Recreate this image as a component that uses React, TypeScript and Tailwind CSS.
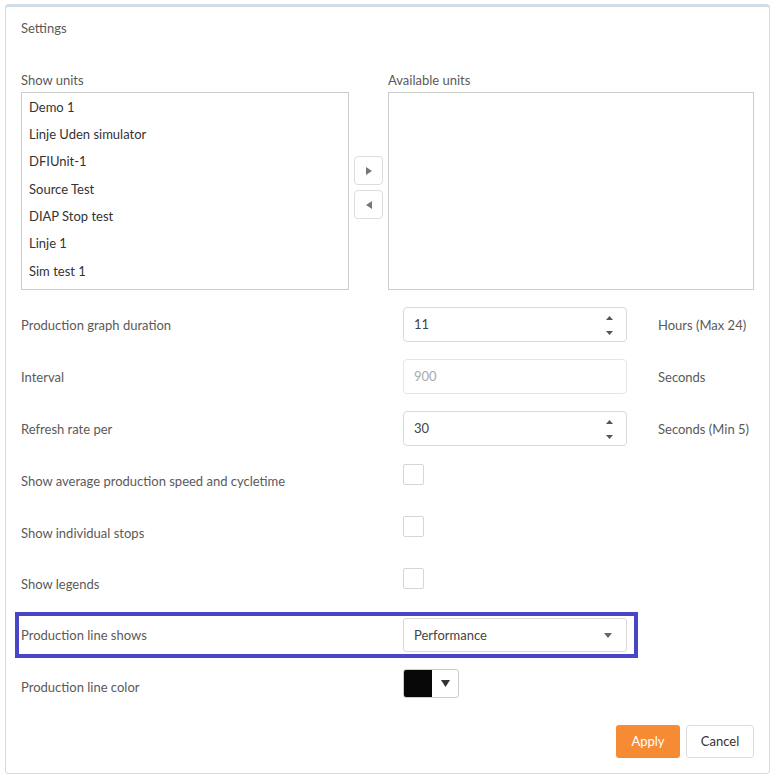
import React from "react"

const units = [
  "Demo 1",
  "Linje Uden simulator",
  "DFIUnit-1",
  "Source Test",
  "DIAP Stop test",
  "Linje 1",
  "Sim test 1",
]

function Spinner() {
  return (
    <div className="flex flex-col items-center gap-[11px] pr-[13px]">
      <svg width="7" height="4" viewBox="0 0 7 4">
        <path d="M0 4 L3.5 0 L7 4 Z" fill="#555" />
      </svg>
      <svg width="7" height="4" viewBox="0 0 7 4">
        <path d="M0 0 L7 0 L3.5 4 Z" fill="#555" />
      </svg>
    </div>
  )
}

function NumberField({ value, disabled }: { value: string; disabled?: boolean }) {
  return (
    <div
      className={
        disabled
          ? "w-[224px] h-[35px] rounded-[4px] border border-[#e6e6e6] flex items-center pl-[10px] pt-[1px] text-[#aaaaaa]"
          : "w-[224px] h-[35px] rounded-[4px] border border-[#d9d9d9] flex items-center justify-between pl-[10px] pt-[1px] text-[#444]"
      }
    >
      <span>{value}</span>
      {!disabled && <Spinner />}
    </div>
  )
}

function Checkbox() {
  return <div className="w-[21px] h-[21px] mt-[1px] rounded-[2px] border border-[#d6d6d6] bg-white" />
}

function Row({
  label,
  children,
  unit,
}: {
  label: string
  children: React.ReactNode
  unit?: string
}) {
  return (
    <div className="flex h-[35px] mb-[17px]">
      <div className="w-[382px] flex items-center pt-[2px] text-[#5a5a5a]">{label}</div>
      <div className="w-[224px]">{children}</div>
      {unit && <div className="ml-[31px] flex items-center pt-[2px] text-[#5a5a5a]">{unit}</div>}
    </div>
  )
}

export default function App() {
  return (
    <div className="bg-white min-h-[781px] pt-[4px] pl-[5px] text-[13px]" style={{ fontFamily: "Lato, 'Noto Sans', sans-serif" }}>
      <div className="w-[765px] border border-t-[3px] border-[#d2dce5] rounded-[4px] px-[15px] pt-[12px] pb-[15px]">
        <div className="h-[18px] leading-[18px] text-[#5a5a5a]">Settings</div>

        {/* unit pickers */}
        <div className="flex mt-[34px] mb-[17px]">
          <div className="w-[328px]">
            <div className="h-[18px] leading-[18px] text-[#5a5a5a] mb-[3px]">Show units</div>
            <div className="h-[198px] border border-[#cccccc] pl-[7px] pt-[1px]">
              {units.map((u) => (
                <div key={u} className="h-[27.3px] flex items-center text-[#333]">
                  {u}
                </div>
              ))}
            </div>
          </div>

          <div className="w-[39px] flex flex-col items-center pt-[85px] gap-[5px]">
            <button className="w-[29px] h-[29px] rounded-[4px] border border-[#dddddd] flex items-center justify-center">
              <svg width="6" height="8" viewBox="0 0 6 8">
                <path d="M0 0 L6 4 L0 8 Z" fill="#777" />
              </svg>
            </button>
            <button className="w-[29px] h-[29px] rounded-[4px] border border-[#dddddd] flex items-center justify-center">
              <svg width="6" height="8" viewBox="0 0 6 8">
                <path d="M6 0 L0 4 L6 8 Z" fill="#777" />
              </svg>
            </button>
          </div>

          <div className="w-[366px]">
            <div className="h-[18px] leading-[18px] text-[#5a5a5a] mb-[3px]">Available units</div>
            <div className="h-[198px] border border-[#cccccc]" />
          </div>
        </div>

        <Row label="Production graph duration" unit="Hours (Max 24)">
          <NumberField value="11" />
        </Row>
        <Row label="Interval" unit="Seconds">
          <NumberField value="900" disabled />
        </Row>
        <Row label="Refresh rate per" unit="Seconds (Min 5)">
          <NumberField value="30" />
        </Row>
        <Row label="Show average production speed and cycletime">
          <Checkbox />
        </Row>
        <Row label="Show individual stops">
          <Checkbox />
        </Row>
        <div className="flex h-[35px] mb-[10px]">
          <div className="w-[382px] flex items-center text-[#5a5a5a]">Show legends</div>
          <div className="w-[224px]">
            <Checkbox />
          </div>
        </div>

        {/* highlighted row */}
        <div className="w-[623px] -ml-[6px] border-[4px] border-[#4646c6] p-[2px] flex">
          <div className="w-[382px] flex items-center pt-[2px] text-[#5a5a5a]">Production line shows</div>
          <div className="w-[224px] h-[34px] rounded-[3px] border border-[#d9d9d9] flex items-center justify-between pl-[10px] pr-[14px] pt-[1px] text-[#444]">
            <span>Performance</span>
            <svg width="8" height="5" viewBox="0 0 8 5">
              <path d="M0 0 L8 0 L4 5 Z" fill="#666" />
            </svg>
          </div>
        </div>

        <div className="flex h-[35px] mt-[11px]">
          <div className="w-[382px] flex items-center pt-[2px] text-[#5a5a5a]">Production line color</div>
          <div className="w-[56px] h-[29px] rounded-[3px] border border-[#cccccc] flex overflow-hidden">
            <div className="w-[28px] h-full bg-[#080808]" />
            <div className="flex-1 flex items-center justify-center">
              <svg width="9" height="7" viewBox="0 0 9 7">
                <path d="M0 0 L9 0 L4.5 7 Z" fill="#333" />
              </svg>
            </div>
          </div>
        </div>

        <div className="flex justify-end gap-[6px] mt-[21px]">
          <button className="w-[64px] h-[33px] rounded-[3px] bg-[#f68b33] text-white">Apply</button>
          <button className="w-[68px] h-[33px] rounded-[3px] border border-[#dddddd] bg-white text-[#333]">Cancel</button>
        </div>
      </div>
    </div>
  )
}
